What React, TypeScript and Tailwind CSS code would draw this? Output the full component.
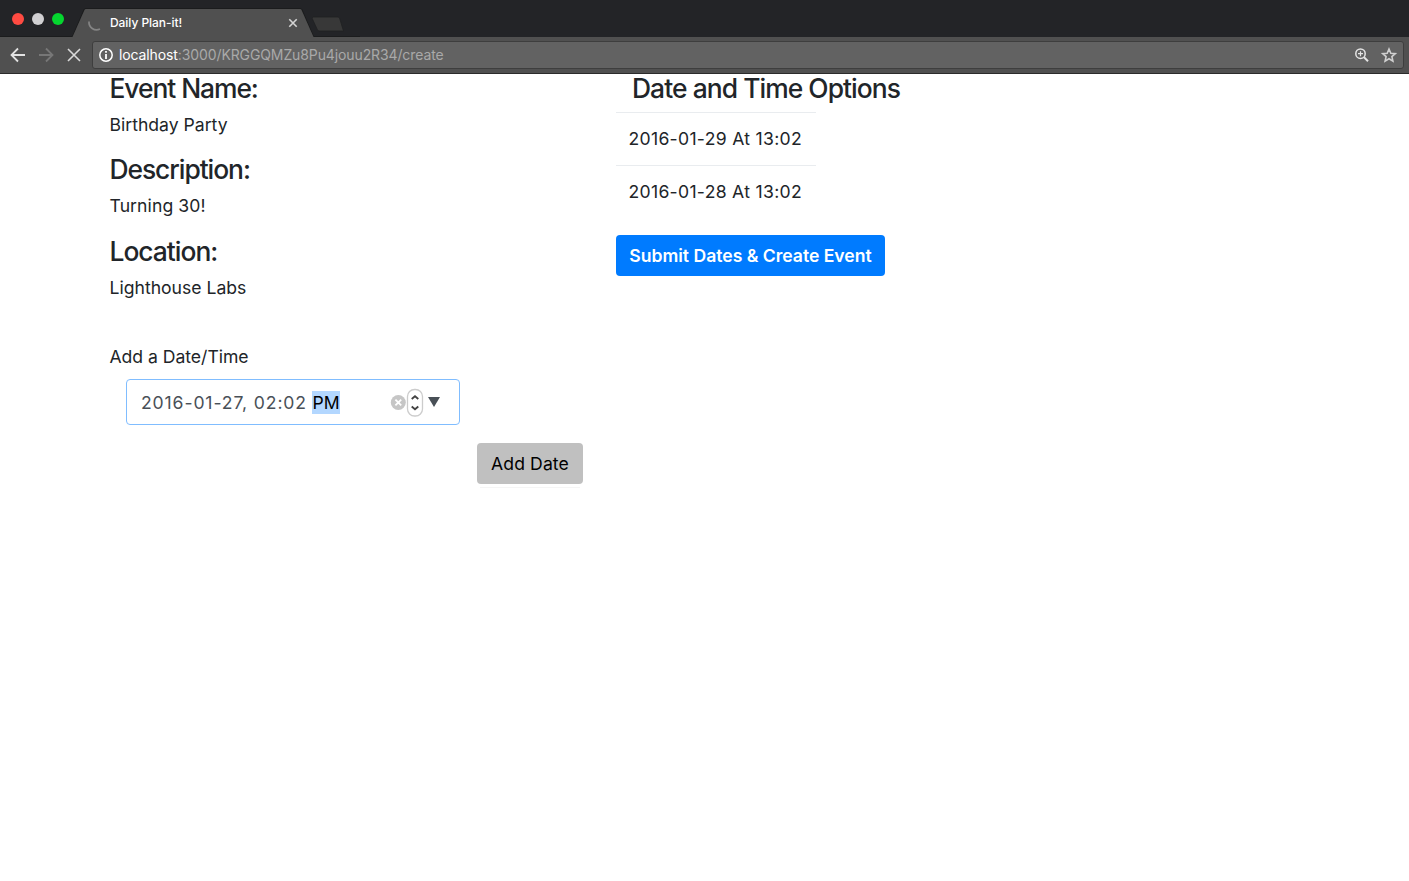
import type { ReactNode } from "react";

const details = [
  { title: "Event Name:", value: "Birthday Party", titleClass: "tracking-[-1.05px]", valueClass: "tracking-[0px]" },
  { title: "Description:", value: "Turning 30!", titleClass: "tracking-[-1.05px]", valueClass: "tracking-[0.08px]" },
  { title: "Location:", value: "Lighthouse Labs", titleClass: "tracking-[-1px]", valueClass: "tracking-[0px]" },
];

const options = ["2016-01-29 At 13:02", "2016-01-28 At 13:02"];

function Heading({ children, className = "" }: { children: ReactNode; className?: string }) {
  return <h4 className={`whitespace-nowrap text-[26.4px] leading-[29px] font-[550] text-[#212529] ${className}`}>{children}</h4>;
}

function TabStrip() {
  return (
    <div className="relative flex h-[37px] items-start bg-[#232427]">
      <svg className="absolute inset-0" width="360" height="37" viewBox="0 0 360 37" fill="none">
        <path d="M0 36.500H72.500L84 9.500Q84.500 8.500 86 8.500H300Q301.500 8.500 302 9.500L313.500 36.500H360" stroke="#1b1c1d" />
        <path d="M72.500 37L84.500 10Q85 9 86 9H300Q301 9 301.500 10L313.500 37Z" fill="#505050" />
        <path d="M313 17H337.500Q339 17 339.500 18L343.500 31H319.500Q318 31 317.500 30L312 18Z" fill="#383838" stroke="#202122" strokeWidth=".8" />
        <circle cx="18" cy="19" r="6" fill="#ff4b42" />
        <circle cx="38" cy="19" r="6" fill="#d1d0d2" />
        <circle cx="58" cy="19" r="6" fill="#05d62f" />
        <path d="M89 21.500C88.500 27.500 94.500 31.500 100 29" stroke="#858585" strokeWidth="1.700" />
        <path d="M289.300 19.300L296.700 26.700M296.700 19.300L289.300 26.700" stroke="#d4d4d4" strokeWidth="1.600" />
      </svg>
      <span className="relative mt-[14px] ml-[110px] text-[12px] leading-[18px] font-medium tracking-[-0.05px] whitespace-nowrap text-white">Daily Plan-it!</span>
    </div>
  );
}

function Toolbar() {
  return (
    <div className="flex h-[37px] items-start border-b border-[#2b2b2b] bg-[#505050] pt-[4px]">
      <svg width="92" height="28" viewBox="0 0 92 28" fill="none" className="shrink-0">
        <path d="M25 14H12M18 7.500L11.500 14L18 20.500" stroke="#e2e2e2" strokeWidth="1.800" />
        <path d="M39 14H52M46 7.500L52.500 14L46 20.500" stroke="#777777" strokeWidth="1.800" />
        <path d="M68 8L80 20M80 8L68 20" stroke="#d9d9d9" strokeWidth="1.600" />
      </svg>
      <div className="flex h-[28px] w-[1312px] items-center rounded-[3px] border border-[#3e3e3e] bg-[#626262] pl-[5px]">
        <svg width="16" height="16" viewBox="0 0 16 16" fill="none" className="shrink-0">
          <circle cx="8" cy="8" r="6.200" stroke="white" strokeWidth="1.500" />
          <path d="M8 4V5.700M8 7V12" stroke="white" strokeWidth="1.800" />
        </svg>
        <span className="ml-[5px] text-[14px] leading-[20px] tracking-[-0.11px] whitespace-nowrap text-[#a9a9a9]">
          <span className="text-white">localhost</span>:3000/KRGGQMZu8Pu4jouu2R34/create
        </span>
        <svg width="48" height="20" viewBox="0 0 48 20" fill="none" className="mr-px ml-auto shrink-0">
          <circle cx="6.500" cy="8.700" r="4.700" stroke="#e5e5e5" strokeWidth="1.500" />
          <path d="M10 12.200L14 16.200" stroke="#e5e5e5" strokeWidth="2" />
          <path d="M4 8.700H9M6.500 6.200V11.200" stroke="#e5e5e5" strokeWidth="1.200" />
          <path d="M35 4L36.800 8.200L41.300 8.600L37.900 11.600L38.900 16.100L35 13.700L31.100 16.100L32.100 11.600L28.700 8.600L33.200 8.200Z" stroke="#d0d0d0" strokeWidth="1.600" />
        </svg>
      </div>
    </div>
  );
}

function DateInput() {
  return (
    <div className="mt-[9px] ml-[16px] flex h-[46px] w-[334px] items-center rounded-[4px] border border-[#80bdff] bg-white pl-[14.5px]">
      <span className="mt-[2px] w-[166px] text-[17.6px] leading-[23px] tracking-[0.88px] whitespace-nowrap text-[#495057]">2016-01-27, 02:02</span>
      <span className="mt-px ml-[4.5px] h-[23px] w-[28px] bg-[#b3d7ff] pl-px text-[17.6px] leading-[24px] text-black">PM</span>
      <svg width="54" height="30" viewBox="0 0 54 30" fill="none" className="mr-[16px] ml-auto shrink-0">
        <circle cx="9.300" cy="15.500" r="7.500" fill="#c6c6c6" />
        <path d="M6.400 12.600L12.200 18.400M12.200 12.600L6.400 18.400" stroke="white" strokeWidth="1.800" />
        <rect x="18.500" y="2.500" width="15" height="26.500" rx="7" fill="white" stroke="#cccccc" strokeWidth="1.300" />
        <path d="M22.700 12L26 9.200L29.300 12M22.700 19.500L26 22.300L29.300 19.500" stroke="#424242" strokeWidth="1.800" />
        <path d="M39 10H51L45 20Z" fill="#495057" />
      </svg>
    </div>
  );
}

export default function App() {
  return (
    <div className="h-[881px] w-[1409px] overflow-hidden bg-white font-[Inter,sans-serif] text-[17.6px] text-[#212529]">
      <TabStrip />
      <Toolbar />
      <main className="flex items-start pl-[109.5px]">
        <section className="flex w-[506.5px] flex-col">
          {details.map((item) => (
            <div key={item.title} className="h-[81.4px]">
              <Heading className={item.titleClass}>{item.title}</Heading>
              <p className={`mt-[9px] leading-[26px] whitespace-nowrap ${item.valueClass}`}>{item.value}</p>
            </div>
          ))}
          <label className="mt-[25.8px] leading-[26px] tracking-[-0.03px]">Add a Date/Time</label>
          <DateInput />
          <button className="mt-[18px] ml-[367.5px] h-[41px] w-[106px] rounded-[4px] bg-[#c0c0c0] pt-px tracking-[0.1px] whitespace-nowrap text-black">Add Date</button>
          <div className="mt-[3px] ml-[370.5px] h-px w-[100px] bg-[#f5f5f5]" />
        </section>
        <section className="flex w-[320px] flex-col items-start">
          <Heading className="ml-[16px] tracking-[-0.93px]">Date and Time Options</Heading>
          <ul className="mt-[9px] w-[200px]">
            {options.map((option) => (
              <li key={option} className="h-[53px] border-t border-[#e9ecef] pl-[12.5px] leading-[52px] tracking-[0.3px] whitespace-nowrap">{option}</li>
            ))}
          </ul>
          <button className="mt-[17px] h-[41px] w-[269px] rounded-[4px] bg-[#007bff] pt-px font-[560] tracking-[-0.02px] whitespace-nowrap text-white">Submit Dates &amp; Create Event</button>
        </section>
      </main>
    </div>
  );
}
